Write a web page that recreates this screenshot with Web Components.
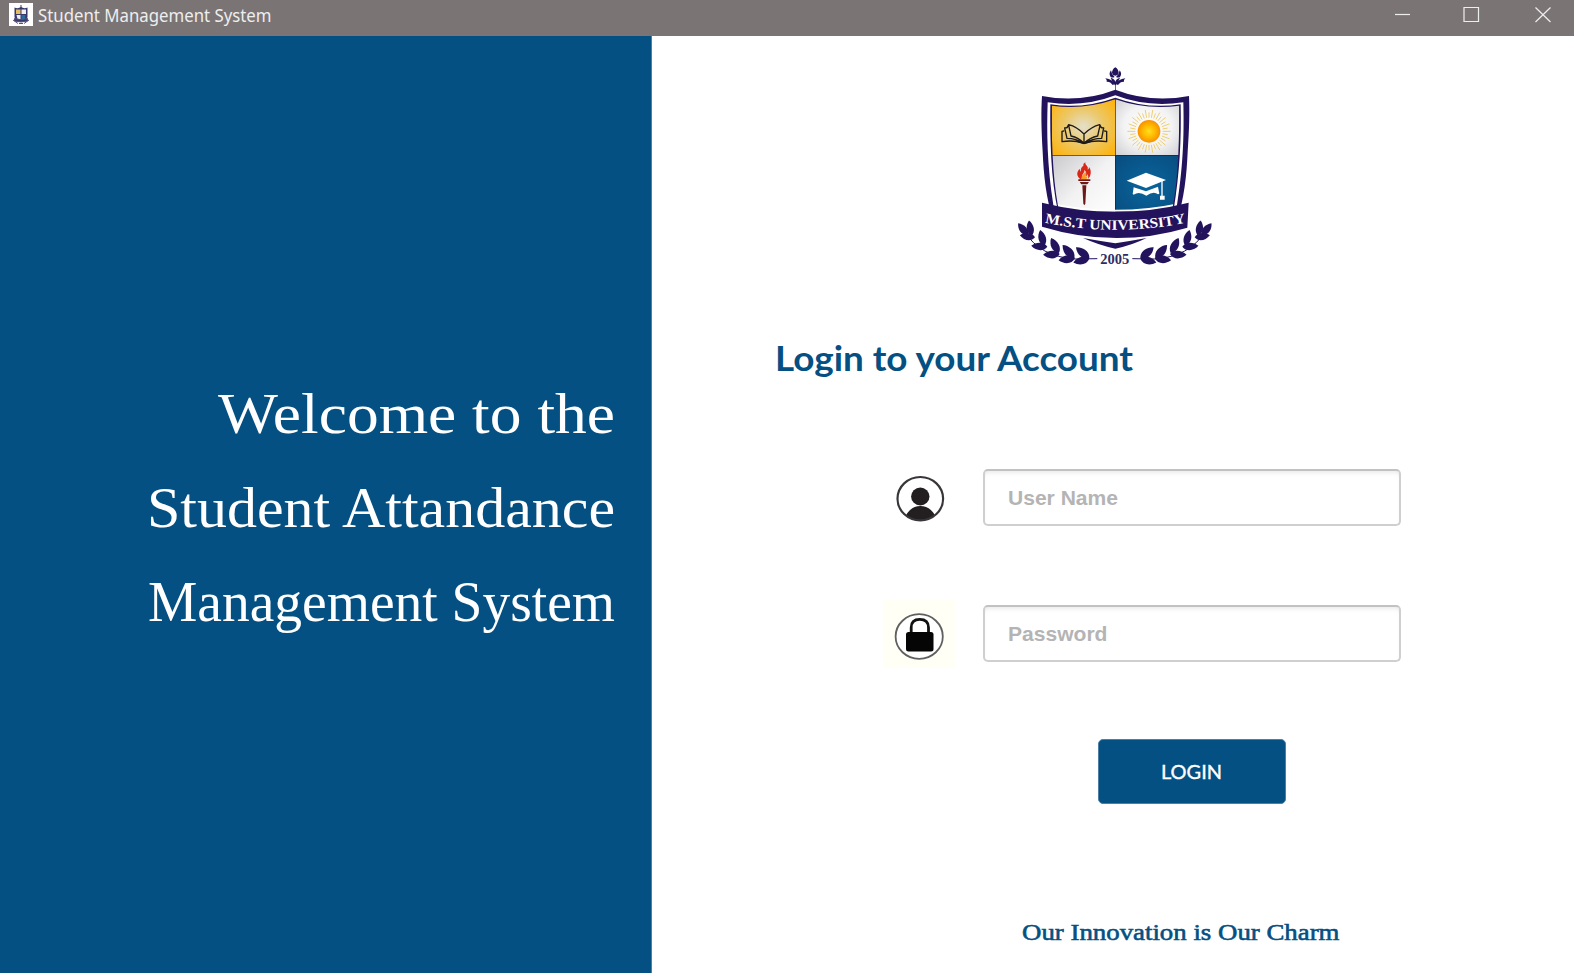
<!DOCTYPE html>
<html lang="en">
<head>
<meta charset="utf-8">
<title>Student Management System</title>
<style>
html,body{margin:0;height:100%;overflow:hidden;background:#fff}
</style>
</head>
<body>
<app-window></app-window>
<script>
const define=(name,html,after)=>customElements.define(name,class extends HTMLElement{
  constructor(){super();this.attachShadow({mode:'open'}).innerHTML=html}
  connectedCallback(){if(after)after(this)}
});

/* One line of text, condensed or expanded to fill the width attribute. */
define('fit-text',`<style>:host{display:block;white-space:pre}span{display:inline-block;transform-origin:0 50%}</style><span><slot></slot></span>`,el=>{
  const span=el.shadowRoot.querySelector('span');
  const target=parseFloat(el.getAttribute('width'));
  const w=span.getBoundingClientRect().width;
  el.style.width=target+'px';
  span.style.transform=`scaleX(${target/w})`;
});

define('uni-crest',`<style>:host{display:block}svg{display:block;width:100%;height:100%}</style>
<svg viewBox="0 0 690 660">
<defs>
<radialGradient id="gold" cx=".5" cy=".5" r=".65"><stop offset="0" stop-color="#e5e0cc"/><stop offset=".45" stop-color="#ebc96e"/><stop offset="1" stop-color="#fdb40f"/></radialGradient>
<radialGradient id="grey" cx=".5" cy=".5" r=".75"><stop offset="0" stop-color="#fff"/><stop offset=".5" stop-color="#f3f3f4"/><stop offset="1" stop-color="#c9c9cd"/></radialGradient>
<linearGradient id="pale" x1="0" y1="0" x2="1" y2="1"><stop offset="0" stop-color="#c9c9cd"/><stop offset=".5" stop-color="#f2f2f3"/><stop offset="1" stop-color="#fff"/></linearGradient>
<radialGradient id="blue" cx=".5" cy=".5" r=".75"><stop offset="0" stop-color="#0a659c"/><stop offset="1" stop-color="#074b7e"/></radialGradient>
<radialGradient id="sun"><stop offset="0" stop-color="#ffdf20"/><stop offset=".55" stop-color="#ffb800"/><stop offset="1" stop-color="#f69100"/></radialGradient>
<clipPath id="in"><path d="M155 152Q250 166 346 133Q440 166 538 152Q538 370 515 470H178Q154 370 155 152Z"/></clipPath>
<path id="leaf" d="M0 0C10 -16 32 -14 46 0C32 13 10 14 0 0Z"/>
<g id="laurel" fill="#22135c">
<path d="M74 530Q120 605 225 612L292 611" fill="none" stroke="#22135c" stroke-width="3"/>
<use href="#leaf" transform="translate(84 540) rotate(-130)"/>
<use href="#leaf" transform="translate(95 542) rotate(-100)"/>
<use href="#leaf" transform="translate(105 547) rotate(-172)"/>
<use href="#leaf" transform="translate(133 572) rotate(-105) scale(1.05)"/>
<use href="#leaf" transform="translate(142 575) rotate(183)scale(1.05)"/>
<use href="#leaf" transform="translate(177 594) rotate(-118) scale(1.1)"/>
<use href="#leaf" transform="translate(179 597) rotate(177) scale(1.08)"/>
<use href="#leaf" transform="translate(223 608) rotate(-133) scale(1.12)"/>
<use href="#leaf" transform="translate(225 609) rotate(172) scale(1.08)"/>
<use href="#leaf" transform="translate(268 609) rotate(-141) scale(1.12)"/>
<use href="#leaf" transform="translate(268 610) rotate(165) scale(1.08)"/>
</g>
<path id="arc" d="M134 503Q346 546 558 503"/>
</defs>
<g fill="#22135c">
<path d="M346 37Q336 43 336 54Q338 62 346 62Q354 62 356 54Q356 43 346 37ZM333 46Q325 56 332 66Q337 69 344 66Q334 58 333 46ZM359 46Q367 56 360 66Q355 69 348 66Q358 58 359 46Z"/>
<path d="M343 88Q339 73 316 70Q322 76 320 80Q331 79 338 90ZM349 88Q353 73 376 70Q370 76 372 80Q361 79 354 90Z"/><path d="M332 68Q345 72 346 81Q347 72 360 68L354 82L347 91V107H345V91L338 82Z"/>
<path d="M126 123Q240 145 346 104Q452 145 567 123C569 170 568 220 563 290C560 360 553 430 530 500H161C138 430 131 360 128 290C124 220 123 170 126 123Z"/>
</g>
<path fill="#fff" d="M143 142Q250 158 346 121Q442 158 550 142C552 220 552 320 531 450L520 480H173L160 450C141 330 140 230 143 142Z"/>
<path fill="#22135c" d="M151 148Q250 163 346 128Q442 163 542 148C544 250 540 350 520 470H174C152 370 150 250 151 148Z"/>
<g clip-path="url(#in)">
<rect x="155" y="130" width="190" height="170" fill="url(#gold)"/>
<rect x="347" y="130" width="193" height="170" fill="url(#grey)"/>
<rect x="155" y="302" width="190" height="180" fill="url(#pale)"/>
<rect x="347" y="302" width="193" height="180" fill="url(#blue)"/>
</g>
<g fill="none" stroke="#1d1b1b" stroke-width="4" stroke-linejoin="round" stroke-linecap="round">
<path d="M252 265V237Q230 215 206 209L201 218M252 237Q275 215 299 209L304 218M206 211L213 243Q236 248 252 265Q270 248 293 243L300 211"/>
<path d="M201 218L194 219L201 250Q228 250 252 265Q278 250 305 250L311 219L304 218M191 228L186 229V260Q220 254 252 265Q284 254 320 260V229L314 228"/>
</g>
<path d="M222 258Q240 256 252 261Q266 256 284 258L252 268Z" fill="#1d1b1b"/>
<g id="rays" stroke="#edc558" stroke-width="2.5"></g>
<circle cx="447" cy="229" r="34" fill="url(#sun)"/>
<g>
<path fill="#da2718" d="M241 373Q228 361 233 350Q235 344 240 342Q239 349 243 350Q240 339 250 332Q248 326 256 322Q254 329 261 333Q265 337 263 344Q268 341 267 336Q275 347 271 360Q270 368 263 373Q267 365 262 357Q262 364 257 363Q262 352 253 345Q254 353 248 358Q243 365 247 371Z"/>
<path fill="#f89b28" d="M244 372Q243 363 250 358Q257 352 254 347Q262 357 256 365L262 363Q263 369 259 373Z"/>
<path fill="#6d1818" d="M235 373H271V378H235ZM239 381H267L262 388H244ZM247 391H259L256 446L253 451L250 446Z"/>
</g>
<g fill="#fff">
<path d="M380 377L438 353L498 375L438 399Z"/>
<path d="M401 397L438 409L474 395L477 411Q480 417 474 418Q461 407 439 422Q417 407 401 419Q396 417 399 411Z"/>
<path d="M484 378H488V422H494V434H480V422H484Z"/>
</g>
<path clip-path="url(#in)" fill="#fff" d="M126 438Q346 491 566 438V450Q346 500 126 450Z"/>
<path fill="#22135c" d="M126 443Q346 498 566 443L562 518Q346 582 126 515Z"/>
<text font-family="Liberation Serif,serif" font-weight="bold" font-size="43" fill="#fff"><textPath href="#arc" textLength="426" lengthAdjust="spacingAndGlyphs">M.S.T UNIVERSITY</textPath></text>
<path fill="#22135c" d="M249 549Q300 558 346 565Q390 558 440 549Q395 571 346 581Q298 571 249 549Z"/>
<use href="#laurel"/><use href="#laurel" transform="translate(689 0) scale(-1 1)"/>
<text x="301" y="627" textLength="87" lengthAdjust="spacingAndGlyphs" font-family="Liberation Serif,serif" font-weight="bold" font-size="44" fill="#302b62">2005</text>
</svg>`,el=>{
  let s='';
  for(let i=0;i<36;i++){
    const a=i*Math.PI/18,r=i%2?57:65,c=Math.cos(a),d=Math.sin(a);
    s+=`<line x1="${447+41*c}" y1="${229+41*d}" x2="${447+r*c}" y2="${229+r*d}"/>`;
  }
  el.shadowRoot.querySelector('#rays').innerHTML=s;
});

define('title-bar',`<style>
:host{display:flex;height:36px;box-sizing:border-box;background:#7b7475;color:#eee;font:17.2px/32px "Noto Sans","Open Sans",sans-serif;padding:0 22.500px 0 9px}
.ico{width:24px;height:23px;background:#fff;margin:3px 5px 0 0;flex:none}
.ico svg{display:block;width:24px;height:23px}
.ctl{display:flex;margin-left:auto;gap:52.500px;padding-top:6px}
.ctl svg{width:18px;height:18px;fill:none;stroke:#eee;stroke-width:1.2}
</style>
<div class="ico"><svg viewBox="0 0 24 23"><path d="M5.500 4.500Q9 6 12 4Q15 6 18.500 4.500V14L17 18H7L5.500 14Z" fill="#39386c"/><path d="M7 6.500H11.500V11H7Z" fill="#e4bf62"/><path d="M12.500 6.500H17V11H12.500ZM7.500 12H11.500V16H8.500Z" fill="#eee"/><path d="M12.500 12H16.500L16 16H12.500Z" fill="#286ba0"/><path d="M12 2V5" stroke="#39386c"/><path d="M5.500 15.500Q12 18 18.500 15.500V18Q12 20 5.500 18ZM4 17L9 20.500M20 17L15 20.500M10 20.500H14" stroke="#55517f" fill="#39386c"/></svg></div>
<fit-text width="233.500">Student Management System</fit-text>
<div class="ctl"><svg viewBox="0 0 18 18"><path d="M2 8.500H17"/></svg><svg viewBox="0 0 18 18"><path d="M1 1.500H15.500V15.500H1Z"/></svg><svg viewBox="0 0 18 18"><path d="M1.500 1.500L16.500 16M16.500 1.500L1.500 16"/></svg></div>`);

define('welcome-panel',`<style>
:host{display:block;box-sizing:border-box;width:652px;flex:none;background:#045082;color:#fff;border-right:1px solid #4b7fa5;padding:331px 36px 0 0;font:57.500px/94px "Liberation Serif",serif}
fit-text{margin-left:auto}
</style><fit-text width="397">Welcome to the</fit-text><fit-text width="468">Student Attandance</fit-text><fit-text width="467">Management System</fit-text>`);

define('icon-user',`<style>:host{display:block;width:72px;height:68px}svg{display:block}</style>
<svg width="72" height="68" viewBox="883 465 72 68"><defs><clipPath id="c"><ellipse cx="920.300" cy="498.700" rx="22.500" ry="21.500"/></clipPath></defs><ellipse cx="920.300" cy="496.500" rx="9.200" ry="9" fill="#231f20"/><path clip-path="url(#c)" fill="#231f20" d="M904 520Q909 506 920.300 506Q932 506 937 520V524H904Z"/><ellipse cx="920.300" cy="498.700" rx="22.800" ry="21.700" fill="none" stroke="#39363a" stroke-width="2.200"/></svg>`);

define('icon-lock',`<style>:host{display:block;width:72px;height:68px;background:#fffff5}svg{display:block}</style>
<svg width="72" height="68" viewBox="883 599.500 72 68"><ellipse cx="919.200" cy="636" rx="23.600" ry="22.300" fill="#fff" stroke="#606060" stroke-width="1.800"/><path d="M911.200 634V627Q911.200 618.800 919.700 618.800Q928.500 618.800 928.500 627V634" fill="none" stroke="#111" stroke-width="2.800"/><rect x="906" y="631.500" width="27.500" height="19.500" rx="2.500" fill="#050505"/></svg>`);

define('text-field',`<style>
:host{display:flex;align-items:center;box-sizing:border-box;width:418px;height:57px;border:2px solid #cfcfcf;border-top-color:#c2c2c2;border-radius:5px;background:#fff;box-shadow:inset 0 4px 4px -2px #ebebeb;padding:1px 0 0 23px;font:bold 20.500px/24px "Liberation Sans",Arial,sans-serif;color:#b4b4b4}
</style><slot></slot>`);

define('login-button',`<style>
:host{display:flex;align-items:center;justify-content:center;width:187.500px;height:65px;box-sizing:border-box;border:1px solid #4b7fa5;border-radius:5px;background:#045082;color:#fff;font:18.800px/24px Lato,sans-serif;-webkit-text-stroke:.35px #fff;padding-top:1px}
</style><slot></slot>`);

define('login-panel',`<style>
:host{display:flex;flex-direction:column;flex:1;background:#fff;color:#045082}
uni-crest{width:230px;height:220px;margin:19px 0 0 348px}
.head{margin:59px 0 0 123px;font:bold 35px/46px Lato,sans-serif}
.row{display:flex;gap:28px;padding-left:231px}
.u{margin-top:85px}.u text-field{margin-top:3.500px}
.p{margin-top:66.500px}.p text-field{margin-top:5px}
login-button{margin:71px 0 0 446px}
.foot{margin:112.500px 0 0 370px;font:23.500px/32px "Liberation Serif",serif;-webkit-text-stroke:.6px #045082}
</style>
<uni-crest></uni-crest>
<fit-text class="head" width="358">Login to your Account</fit-text>
<div class="row u"><icon-user></icon-user><text-field><fit-text width="110">User Name</fit-text></text-field></div>
<div class="row p"><icon-lock></icon-lock><text-field><fit-text width="99.500">Password</fit-text></text-field></div>
<login-button><fit-text width="61">LOGIN</fit-text></login-button>
<fit-text class="foot" width="317.500">Our Innovation is Our Charm</fit-text>`);

define('app-window',`<style>:host{display:flex;flex-direction:column;width:1574px;height:973px;overflow:hidden}main{display:flex;flex:1}</style>
<title-bar></title-bar><main><welcome-panel></welcome-panel><login-panel></login-panel></main>`);
</script>
</body>
</html>
